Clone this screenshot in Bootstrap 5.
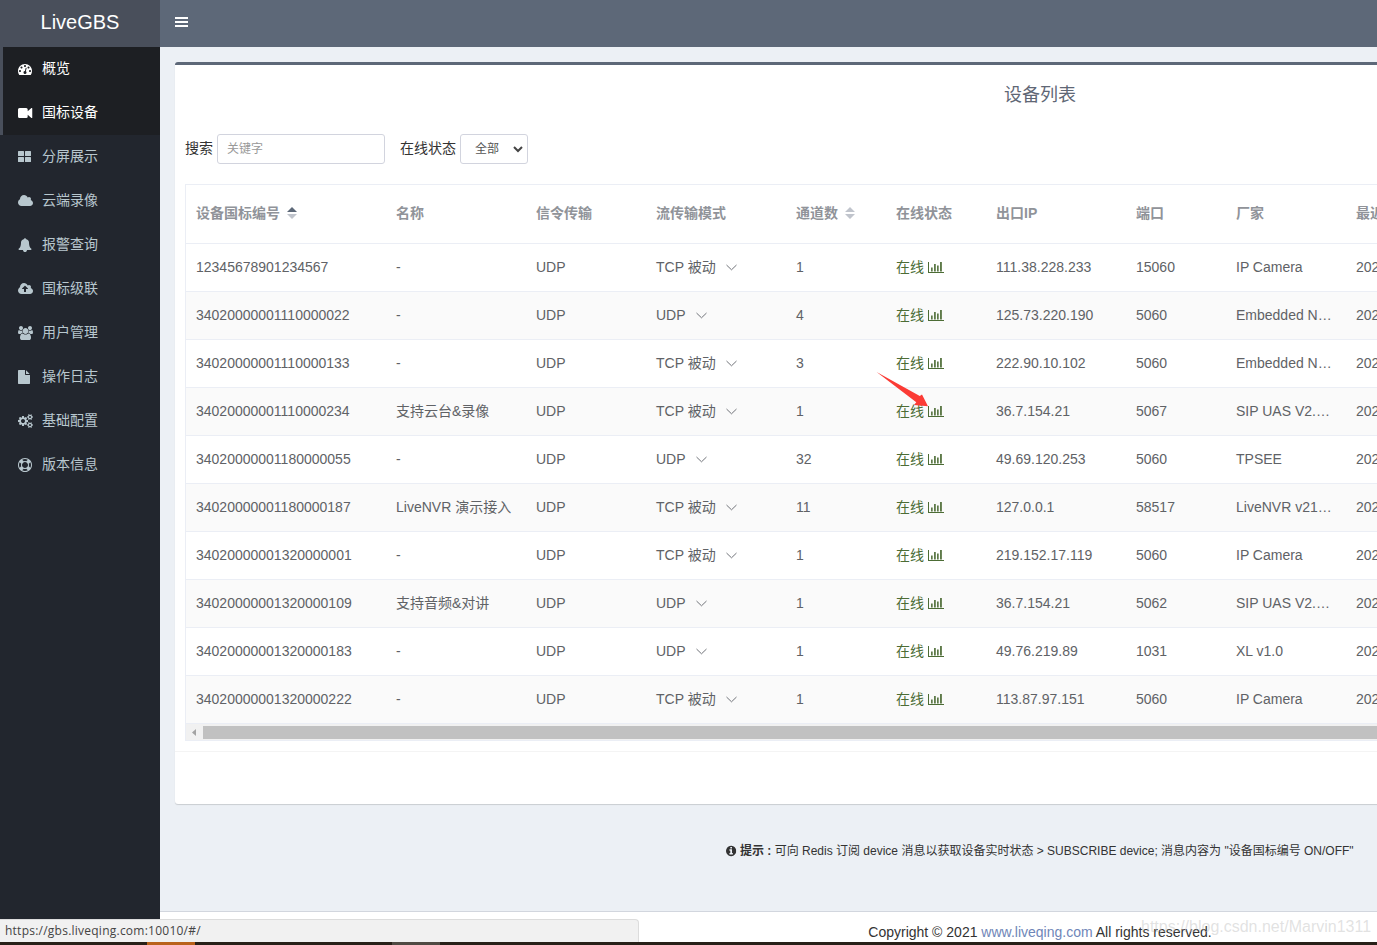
<!DOCTYPE html>
<html lang="zh-CN">
<head>
<meta charset="utf-8">
<meta name="viewport" content="width=device-width, initial-scale=1">
<title>LiveGBS</title>
<link rel="stylesheet" href="https://cdn.jsdelivr.net/npm/bootstrap@5.3.0/dist/css/bootstrap.min.css">
<style>
  html, body { height: 945px; overflow: hidden; }
  body { font-family: "Liberation Sans", "Noto Sans CJK SC", sans-serif; font-size: 14px; line-height: 20px; color: #333; background: #ecf0f5; }
  .viewport { width: 100%; height: 942px; overflow: hidden; }
  .shell { width: 1920px; height: 942px; }
  .side { width: 160px; height: 920px; background: #22262e; }
  .brand { height: 47px; background: #494f5b; font-size: 20px; line-height: 44px; color: #fff; }
  .side .nav-link { height: 44px; padding: 12px 5px 12px 15px; border-left: 3px solid transparent; color: #b8c7ce; display: flex; align-items: center; white-space: nowrap; }
  .side .nav-link.active { background: #1d1f23; color: #fff; border-left-color: #494f5b; }
  .ico { height: 14px; fill: currentColor; flex: none; }
  .ico-slot { width: 24px; display: flex; flex: none; }
  .topbar { height: 47px; background: #5d6878; padding: 0 15px; color: #fff; }
  .work { padding: 15px 15px 0; height: 864px; }
  .panel { --bs-card-border-width: 0; border-top: 3px solid #5d6878; border-radius: 3px; box-shadow: 0 1px 1px rgba(0,0,0,.15); height: 742px; color: inherit; }
  .panel-title { font-size: 18px; line-height: 20px; color: #5f6775; padding-top: 20px; height: 69px; }
  .filters { padding: 0 10px; height: 30px; }
  .filters label, .side .nav-link > span:last-child { padding-bottom: 2px; }
  .filters .form-control, .filters .form-select { height: 30px; font-size: 12px; line-height: 18px; border: 1px solid #d2d4de; border-radius: 3px; color: #555; background-color: #fff; }
  .filters .form-control { width: 168px; padding: 5px 10px 5px 9px; margin: 0 15px 0 4px; }
  .filters .form-control::placeholder { color: #999; }
  .filters .form-select { width: 68px; padding: 5px 0 5px 14px; margin-left: 4px; background-image: none; }
  .pick { position: relative; }
  .pick svg { position: absolute; right: 5px; top: 12px; }
  .grid-box { margin: 20px 10px 0; border: 1px solid #ebeef5; border-right: 0; height: 557px; }
  .grid-box .table { width: 1860px; table-layout: fixed; margin: 0; --bs-table-color: #606266; }
  .grid-box th, .grid-box td { padding: 0 10px; border-bottom: 1px solid #ebeef5; height: 48px; line-height: 23px; vertical-align: middle; color: #606266; white-space: nowrap; overflow: hidden; text-overflow: ellipsis; box-shadow: none; }
  .grid-box thead tr th { height: 58px; color: #909399; font-weight: 700; }
  .grid-box tbody tr:nth-child(even) td { background: #fafafa; }
  .sorter { margin-left: 7px; vertical-align: -1px; }
  .grid-box td.live { color: #4c6c35; overflow: visible; }
  .live svg { vertical-align: -1px; margin-left: 4px; }
  .mode svg { margin-left: 10px; }
  .track { height: 17px; background: #f1f1f1; }
  .track .thumb { height: 13px; background: #c1c1c1; }
  .panel-foot { margin-top: 10px; border-top: 1px solid #f4f4f4; }
  .tip { font-size: 12px; line-height: 18px; margin-top: 38px; }
  .foot { height: 31px; background: #fff; border-top: 1px solid #d2d6de; padding-top: 11px; line-height: 18px; }
  .foot a { color: #6f86b8; text-decoration: none; }
  .status { position: absolute; left: 0; top: 919px; width: 639px; height: 23px; background: #f1f1f1; border: 1px solid #dcdcdc; border-left: 0; border-bottom: 0; border-top-right-radius: 4px; font: 12px/21px "Open Sans", sans-serif; letter-spacing: .24px; color: #444; padding-left: 5px; }
  .taskbar { position: absolute; left: 0; top: 942px; width: 100%; height: 3px; background: #282018; }
  .taskbar i { height: 3px; }
  .wm { position: absolute; left: 1141px; top: 917px; font-size: 16px; color: rgba(190,190,190,.45); white-space: nowrap; }
  .pointer { position: absolute; left: 876px; top: 371px; }
</style>
</head>
<body>
<svg width="0" height="0" class="position-absolute">
  <symbol id="i-dash" viewBox="0 0 1792 1792"><path d="M384 1152q0-53-37.500-90.500t-90.500-37.500-90.500 37.500-37.500 90.500 37.500 90.500 90.500 37.500 90.500-37.500 37.500-90.500zm192-448q0-53-37.500-90.500t-90.500-37.500-90.500 37.500-37.500 90.500 37.500 90.500 90.500 37.500 90.500-37.500 37.500-90.500zm428 481l101-382q6-26-7.500-48.500t-38.500-29.500-48 6.500-30 39.500l-101 382q-60 5-107 43.500t-63 98.500q-20 77 20 146t117 89 146-20 89-117q16-60-6-117t-72-91zm660-33q0-53-37.500-90.500t-90.500-37.500-90.500 37.500-37.500 90.500 37.500 90.500 90.500 37.500 90.500-37.500 37.500-90.500zm-640-640q0-53-37.500-90.500t-90.500-37.500-90.500 37.500-37.500 90.500 37.500 90.500 90.500 37.500 90.500-37.500 37.500-90.500zm448 192q0-53-37.500-90.500t-90.500-37.500-90.500 37.500-37.500 90.500 37.500 90.500 90.500 37.500 90.500-37.500 37.500-90.500zm320 448q0 261-141 483-19 29-54 29h-1402q-35 0-54-29-141-221-141-483 0-182 71-348t191-286 286-191 348-71 348 71 286 191 191 286 71 348z"/></symbol>
  <symbol id="i-video" viewBox="0 0 14.500 14"><path d="M1.500 2h6.700q1.500 0 1.500 1.500v1.800L13.400 2q1.100-.4 1.100.6v8.800q0 1-1.100.6L9.700 8.700v1.800q0 1.500-1.500 1.500H1.500Q0 12 0 10.500v-7Q0 2 1.500 2z"/></symbol>
  <symbol id="i-th" viewBox="0 0 14 14"><path d="M.6 1h4.800q.6 0 .6.6v3.800q0 .6-.6.6H.6Q0 6 0 5.400V1.600Q0 1 .6 1zm7 0h4.800q.6 0 .6.6v3.800q0 .6-.6.6H7.600Q7 6 7 5.400V1.600Q7 1 7.600 1zm-7 6h4.800q.6 0 .6.6v3.800q0 .6-.6.6H.6q-.6 0-.6-.6V7.600Q0 7 .6 7zm7 0h4.800q.6 0 .6.6v3.800q0 .6-.6.6H7.600q-.6 0-.6-.6V7.600Q7 7 7.600 7z"/></symbol>
  <symbol id="i-cloud" viewBox="0 0 1920 1792"><path d="M1920 1152q0 159-112.500 271.500t-271.500 112.500h-1088q-185 0-316.500-131.500t-131.500-316.500q0-132 71-241.500t187-163.500q-2-28-2-43 0-212 150-362t362-150q158 0 286.500 88t187.500 230q70-62 166-62 106 0 181 75t75 181q0 75-41 138 129 30 213 134.500t84 239.500z"/></symbol>
  <symbol id="i-bell" viewBox="0 0 1792 1792"><path d="M1728 1408q0 52-38 90t-90 38h-448q0 106-75 181t-181 75-181-75-75-181h-448q-52 0-90-38t-38-90q50-42 91-88t85-119.500 74.500-158.500 50-206 19.500-260q0-152 117-282.500t307-158.500q-8-19-8-39 0-40 28-68t68-28 68 28 28 68q0 20-8 39 190 28 307 158.500t117 282.500q0 139 19.500 260t50 206 74.500 158.500 85 119.500 91 88z"/></symbol>
  <symbol id="i-up" viewBox="0 0 1920 1792"><path d="M1280 864q0-14-9-23l-352-352q-9-9-23-9t-23 9l-351 351q-10 12-10 24 0 14 9 23t23 9h224v352q0 13 9.500 22.500t22.500 9.500h192q13 0 22.500-9.500t9.500-22.500v-352h224q13 0 22.500-9.500t9.500-22.500zm640 288q0 159-112.500 271.500t-271.500 112.500h-1088q-185 0-316.500-131.500t-131.500-316.500q0-130 70-240t188-165q-2-30-2-43 0-212 150-362t362-150q156 0 285.500 87t188.500 231q71-62 166-62 106 0 181 75t75 181q0 76-41 138 130 31 213.500 135.500t83.500 238.500z"/></symbol>
  <symbol id="i-users" viewBox="0 0 1920 1792"><path d="M593 896q-162 5-265 128h-134q-82 0-138-40.500t-56-118.500q0-353 124-353 6 0 43.500 21t97.500 42.500 119 21.500q67 0 133-23-5 37-5 66 0 139 81 256zm1071 637q0 120-73 189.500t-194 69.500h-874q-121 0-194-69.500t-73-189.500q0-53 3.500-103.500t14-109 26.500-108.500 43-97.500 62-81 85.500-53.500 111.500-20q10 0 43 21.500t73 48 107 48 135 21.500 135-21.500 107-48 73-48 43-21.500q61 0 111.500 20t85.500 53.500 62 81 43 97.500 26.500 108.500 14 109 3.500 103.500zm-1024-1277q0 106-75 181t-181 75-181-75-75-181 75-181 181-75 181 75 75 181zm704 384q0 159-112.500 271.500t-271.500 112.500-271.500-112.500-112.500-271.500 112.500-271.500 271.500-112.500 271.500 112.500 112.500 271.500zm576 225q0 78-56 118.500t-138 40.500h-134q-103-123-265-128 81-117 81-256 0-29-5-66 66 23 133 23 59 0 119-21.500t97.500-42.500 43.500-21q124 0 124 353zm-128-609q0 106-75 181t-181 75-181-75-75-181 75-181 181-75 181 75 75 181z"/></symbol>
  <symbol id="i-file" viewBox="0 0 1792 1792"><path d="M1024 512v-472q22 14 36 28l408 408q14 14 28 36h-472zm-128 32q0 40 28 68t68 28h544v1056q0 40-28 68t-68 28h-1344q-40 0-68-28t-28-68v-1600q0-40 28-68t68-28h800v544z"/></symbol>
  <symbol id="i-cogs" viewBox="0 0 1920 1792"><path d="M896 896q0-106-75-181t-181-75-181 75-75 181 75 181 181 75 181-75 75-181zm768 512q0-52-38-90t-90-38-90 38-38 90q0 53 37.500 90.500t90.500 37.500 90.500-37.500 37.500-90.500zm0-1024q0-52-38-90t-90-38-90 38-38 90q0 53 37.500 90.500t90.500 37.500 90.500-37.500 37.500-90.500zm-384 421v185q0 10-7 19.500t-16 10.500l-155 24q-11 35-32 76 34 48 90 115 7 11 7 20 0 12-7 19-23 30-82.500 89.500t-78.500 59.500q-11 0-21-7l-115-90q-37 19-77 31-11 108-23 155-7 24-30 24h-186q-11 0-20-7.500t-10-17.500l-23-153q-34-10-75-31l-118 89q-7 7-20 7-11 0-21-8-144-133-144-160 0-9 7-19 10-14 41-53t47-61q-23-44-35-82l-152-24q-10-1-17-9.500t-7-19.500v-185q0-10 7-19.500t16-10.500l155-24q11-35 32-76-34-48-90-115-7-11-7-20 0-12 7-20 22-30 82-89t79-59q11 0 21 7l115 90q34-18 77-32 11-108 23-154 7-24 30-24h186q11 0 20 7.500t10 17.500l23 153q34 10 75 31l118-89q8-7 20-7 11 0 21 8 144 133 144 160 0 8-7 19-12 16-42 54t-45 60q23 48 34 82l152 23q10 2 17 10.500t7 19.500zm640 533v140q0 16-149 31-12 27-30 52 51 113 51 138 0 4-4 7-122 71-124 71-8 0-46-47t-52-68q-20 2-30 2t-30-2q-14 21-52 68t-46 47q-2 0-124-71-4-3-4-7 0-25 51-138-18-25-30-52-149-15-149-31v-140q0-16 149-31 13-29 30-52-51-113-51-138 0-4 4-7 4-2 35-20t59-34 30-16q8 0 46 46.500t52 67.500q20-2 30-2t30 2q51-71 92-112l6-2q4 0 124 70 4 3 4 7 0 25-51 138 17 23 30 52 149 15 149 31zm0-1024v140q0 16-149 31-12 27-30 52 51 113 51 138 0 4-4 7-122 71-124 71-8 0-46-47t-52-68q-20 2-30 2t-30-2q-14 21-52 68t-46 47q-2 0-124-71-4-3-4-7 0-25 51-138-18-25-30-52-149-15-149-31v-140q0-16 149-31 13-29 30-52-51-113-51-138 0-4 4-7 4-2 35-20t59-34 30-16q8 0 46 46.500t52 67.500q20-2 30-2t30 2q51-71 92-112l6-2q4 0 124 70 4 3 4 7 0 25-51 138 17 23 30 52 149 15 149 31z"/></symbol>
  <symbol id="i-ring" viewBox="0 0 1792 1792"><path d="M896 0q182 0 348 71t286 191 191 286 71 348-71 348-191 286-286 191-348 71-348-71-286-191-191-286-71-348 71-348 191-286 286-191 348-71zm0 128q-190 0-361 90l194 194q82-28 167-28t167 28l194-194q-171-90-361-90zm-678 1129l194-194q-28-82-28-167t28-167l-194-194q-90 171-90 361t90 361zm678 407q190 0 361-90l-194-194q-82 28-167 28t-167-28l-194 194q171 90 361 90zm0-384q159 0 271.500-112.500t112.500-271.500-112.500-271.500-271.500-112.500-271.500 112.500-112.500 271.500 112.500 271.500 271.500 112.500zm484-217l194 194q90-171 90-361t-90-361l-194 194q28 82 28 167t-28 167z"/></symbol>
  <symbol id="i-info" viewBox="128 0 1536 1792"><path d="M1152 1376v-160q0-14-9-23t-23-9h-96v-512q0-14-9-23t-23-9h-320q-14 0-23 9t-9 23v160q0 14 9 23t23 9h96v320h-96q-14 0-23 9t-9 23v160q0 14 9 23t23 9h448q14 0 23-9t9-23zm-128-896v-160q0-14-9-23t-23-9h-192q-14 0-23 9t-9 23v160q0 14 9 23t23 9h192q14 0 23-9t9-23zm640 416q0 209-103 385.500t-279.500 279.500-385.500 103-385.500-103-279.500-279.500-103-385.500 103-385.500 279.500-279.500 385.500-103 385.500 103 279.500 279.500 103 385.500z"/></symbol>
  <symbol id="i-chart" viewBox="0 0 16 11"><path d="M0 0h1v10h15v1H0z"/><path d="M3 5.500h1.700V9.400H3zM6 2h1.800v7.400H6zM9 3.500h1.700v5.900H9zM12 0h1.900v9.400H12z" opacity=".9"/></symbol>
  <symbol id="i-down" viewBox="0 0 11 7"><path d="M.5 1l5 4.800 5-4.800" fill="none" stroke="#707379"/></symbol>
</svg>

<div class="viewport">
<div class="shell d-flex">
  <aside class="side flex-shrink-0">
    <div class="brand text-center">LiveGBS</div>
    <ul class="nav flex-column" id="menu"></ul>
  </aside>
  <div class="flex-fill d-flex flex-column" style="min-width:0">
    <nav class="topbar d-flex align-items-center">
      <svg width="13" height="10" viewBox="0 0 13 10" fill="#fff" style="margin-top:-3px"><path d="M0 0h13v2H0zM0 4h13v2H0zM0 8h13v2H0z"/></svg>
    </nav>
    <main class="work">
      <section class="card panel">
        <h1 class="panel-title text-center fw-normal m-0">设备列表</h1>
        <form class="filters d-flex align-items-center">
          <label>搜索</label>
          <input class="form-control" type="text" placeholder="关键字">
          <label>在线状态</label>
          <div class="pick">
            <select class="form-select"><option>全部</option></select>
            <svg width="10" height="7" viewBox="0 0 10 7" fill="none" stroke="#444" stroke-width="2"><path d="M1 1l4 4 4-4"/></svg>
          </div>
        </form>
        <div class="grid-box overflow-hidden">
          <table class="table">
            <colgroup><col width="200"><col width="140"><col width="120"><col width="140"><col width="100"><col width="100"><col width="140"><col width="100"><col width="120"><col width="700"></colgroup>
            <thead><tr>
              <th>设备国标编号<svg class="sorter" width="10" height="12"><path d="M0 5l5-5 5 5z" fill="#5d6878"/><path d="M0 7l5 5 5-5z" fill="#c0c4cc"/></svg></th>
              <th>名称</th><th>信令传输</th><th>流传输模式</th>
              <th>通道数<svg class="sorter" width="10" height="12"><path d="M0 5l5-5 5 5zM0 7l5 5 5-5z" fill="#c0c4cc"/></svg></th>
              <th>在线状态</th><th>出口IP</th><th>端口</th><th>厂家</th><th>最近</th>
            </tr></thead>
            <tbody id="rows"></tbody>
          </table>
          <div class="track d-flex align-items-center">
            <svg width="17" height="13" viewBox="0 0 17 13"><path d="M6 6.500l4-3.500v7z" fill="#a3a3a3"/></svg>
            <div class="thumb flex-grow-1"></div>
          </div>
        </div>
        <div class="panel-foot"></div>
      </section>
      <p class="tip text-center mb-0"><svg class="ico" style="height:12px;vertical-align:-2px" width="10.300"><use href="#i-info"/></svg> <b>提示 :</b> 可向 Redis 订阅 device 消息以获取设备实时状态 &gt; SUBSCRIBE device; 消息内容为 "设备国标编号 ON/OFF"</p>
    </main>
    <footer class="foot text-center">Copyright © 2021 <a href="#">www.liveqing.com</a> All rights reserved.</footer>
  </div>
</div>
</div>

<svg class="pointer" width="54" height="37" viewBox="876 371 54 37"><path d="M876.600 372l43.200 24 2.200-1.500 6 11.700-14-1.300 2.300-2.600z" fill="#fb3b35"/></svg>
<div class="wm">https://blog.csdn.net/Marvin1311</div>
<div class="status">https://gbs.liveqing.com:10010/#/</div>
<div class="taskbar d-flex"><i style="width:48px;margin-left:147px;background:#b9621b"></i><i style="width:48px;margin-left:197px;background:#504a43"></i></div>

<script src="https://cdn.jsdelivr.net/npm/bootstrap@5.3.0/dist/js/bootstrap.bundle.min.js"></script>
<script>
  const menu = [['dash','概览',14],['video','国标设备',14.5],['th','分屏展示',14],['cloud','云端录像',15],['bell','报警查询',14],['up','国标级联',15],['users','用户管理',15],['file','操作日志',14],['cogs','基础配置',15],['ring','版本信息',14]];
  document.getElementById('menu').innerHTML = menu.map(([id, label, w], i) =>
    `<li class="nav-item"><a class="nav-link${i < 2 ? ' active' : ''}" href="#"><span class="ico-slot"><svg class="ico" width="${w}"><use href="#i-${id}"/></svg></span><span>${label}</span></a></li>`).join('');

  const T = 'TCP 被动', U = 'UDP';
  const devices = [
    ['12345678901234567','-',T,1,'111.38.228.233',15060,'IP Camera'],
    ['34020000001110000022','-',U,4,'125.73.220.190',5060,'Embedded N…'],
    ['34020000001110000133','-',T,3,'222.90.10.102',5060,'Embedded N…'],
    ['34020000001110000234','支持云台&amp;录像',T,1,'36.7.154.21',5067,'SIP UAS V2.…'],
    ['34020000001180000055','-',U,32,'49.69.120.253',5060,'TPSEE'],
    ['34020000001180000187','LiveNVR 演示接入',T,11,'127.0.0.1',58517,'LiveNVR v21…'],
    ['34020000001320000001','-',T,1,'219.152.17.119',5060,'IP Camera'],
    ['34020000001320000109','支持音频&amp;对讲',U,1,'36.7.154.21',5062,'SIP UAS V2.…'],
    ['34020000001320000183','-',U,1,'49.76.219.89',1031,'XL v1.0'],
    ['34020000001320000222','-',T,1,'113.87.97.151',5060,'IP Camera']
  ];
  document.getElementById('rows').innerHTML = devices.map(([id, name, mode, ch, ip, port, maker]) =>
    `<tr><td>${id}</td><td>${name}</td><td>UDP</td><td class="mode">${mode}<svg width="11" height="7"><use href="#i-down"/></svg></td><td>${ch}</td>` +
    `<td class="live">在线<svg width="16" height="11" fill="currentColor"><use href="#i-chart"/></svg></td><td>${ip}</td><td>${port}</td><td>${maker}</td><td>202</td></tr>`).join('');
</script>
</body>
</html>
